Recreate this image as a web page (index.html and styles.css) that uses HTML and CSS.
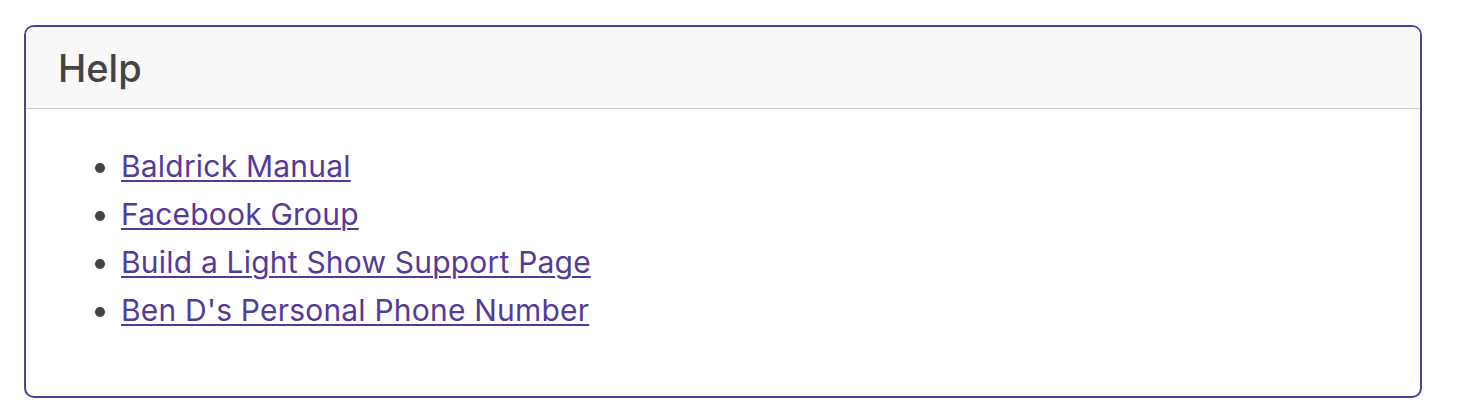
FILE: index.html
```html
<!DOCTYPE html>
<html>
<head>
<meta charset="utf-8">
<link rel="stylesheet" href="styles.css">
</head>
<body>
<div class="page">
  <section class="card">
    <header class="card-header"><h2 class="card-title">Help</h2></header>
    <div class="card-body">
      <ul class="links">
        <li><a href="#">Baldrick Manual</a></li>
        <li><a href="#">Facebook Group</a></li>
        <li><a href="#">Build a Light Show Support Page</a></li>
        <li><a href="#">Ben D's Personal Phone Number</a></li>
      </ul>
    </div>
  </section>
</div>
</body>
</html>
```
FILE: styles.css
```css
html, body { margin: 0; padding: 0; background: #fff; }
body { font-family: Inter, "Liberation Sans", Arial, sans-serif; color: #444; }
.page { padding: 25px 50px 0 24px; }
.card {
  width: 1398px;
  height: 373px;
  box-sizing: border-box;
  border: 2px solid #563d9a;
  border-radius: 10px;
  overflow: hidden;
  display: flex;
  flex-direction: column;
}
.card-header {
  background: #f8f8f8;
  border-bottom: 1.5px solid #cfcfcf;
  height: 82px;
  box-sizing: border-box;
  display: flex;
  align-items: center;
  padding-left: 32px;
}
.card-title { margin: 0; font-size: 38px; font-weight: 500; color: #444; }
.card-body { padding: 33px 0 0 0; }
.links { margin: 0; padding-left: 95px; list-style: disc; }
.links li { font-size: 30px; line-height: 48px; color: #444; letter-spacing: 0.2px; }
.links a { color: #553a99; text-decoration: underline; text-underline-offset: 3px; text-decoration-thickness: 2px; }
```
